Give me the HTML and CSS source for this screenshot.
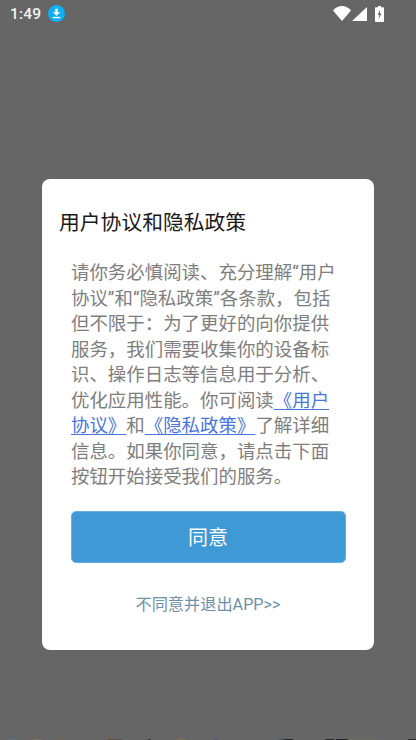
FILE: index.html
```html
<!DOCTYPE html>
<html lang="zh-CN">
<head>
<meta charset="utf-8">
<title>用户协议和隐私政策</title>
<link rel="stylesheet" href="styles.css">
</head>
<body>
<div class="screen">
  <header class="status">
    <span class="time">1:49</span>
    <svg class="dl" viewBox="0 0 18 18"><circle cx="9" cy="9" r="9" fill="#10aef5"/><path d="M7.600 4h2.800v3.600H13L9 11.400 5 7.600h2.600z" fill="#fff"/><rect x="5" y="12.600" width="8" height="1.400" fill="#fff"/></svg>
    <span class="spacer"></span>
    <svg class="wifi" viewBox="0 0 18 15"><path d="M0 4.500C2.400 1.700 5.500 0 9 0s6.600 1.700 9 4.500L9 15z" fill="#fff"/></svg>
    <svg class="signal" viewBox="0 0 15 14"><path d="M15 0v14H0z" fill="#fff"/></svg>
    <svg class="batt" viewBox="0 0 9 16"><path d="M3 0h3v1.300h2.200a.8.800 0 0 1 .8.800v13.100a.8.800 0 0 1-.8.800H.8a.8.800 0 0 1-.8-.8V2.100a.8.800 0 0 1 .8-.8H3z" fill="#fff"/><path d="M5.200 3.800 2.500 8.800h1.700L3.600 13l2.900-5.400H4.700z" fill="#666"/></svg>
  </header>
  <main class="stage">
    <section class="dialog">
      <h1 class="title">用户协议和隐私政策</h1>
      <p class="body">请你务必慎阅读、充分理解“用户协议”和“隐私政策”各条款，包括但不限于：为了更好的向你提供服务，我们需要收集你的设备标识、操作日志等信息用于分析、优化应用性能。你可阅读<a class="link" href="#">《用户协议》</a>和<a class="link" href="#">《隐私政策》</a>了解详细信息。如果你同意，请点击下面按钮开始接受我们的服务。</p>
      <button class="agree">同意</button>
      <a class="refuse" href="#">不同意并退出APP&gt;&gt;</a>
    </section>
  </main>
  <div class="peek"></div>
</div>
</body>
</html>
```
FILE: styles.css
```css
* { box-sizing: border-box; }
html, body { margin: 0; padding: 0; }
body { font-family: "Roboto", "Noto Sans CJK SC", sans-serif; background: #666; }
.screen { width: 416px; height: 740px; overflow: hidden; background: #666; display: flex; flex-direction: column; }
.status { height: 27px; flex: none; display: flex; align-items: center; padding: 0 32px 0 10px; color: #f2f2f2; }
.time { font-size: 15.500px; font-weight: 500; letter-spacing: .2px; width: 38px; }
.dl { width: 17px; height: 17px; }
.spacer { flex: 1; }
.wifi { width: 18px; height: 15px; }
.signal { width: 15px; height: 14px; margin-left: 1px; }
.batt { width: 9px; height: 16px; margin-left: 8px; }
.stage { flex: 1; padding: 152px 42px 0; }
.dialog { width: 332px; height: 471px; background: #fff; border-radius: 8px; display: flex; flex-direction: column; padding: 31px 29px 0 29px; }
.title { margin: 0 0 0 -12px; font-size: 20.800px; line-height: 26px; font-weight: 400; color: #1a1a1a; white-space: nowrap; }
.body { margin: 25px 0 0; width: 274px; font-size: 18.450px; line-height: 25.500px; font-weight: 400; color: #7e7e7e; }
.link { color: #4a74e0; text-decoration: underline; text-underline-offset: 2px; text-decoration-thickness: 1px; }
.agree { margin-top: 20px; margin-left: -.5px; width: 275px; height: 52px; flex: none; border: 1px solid #64b0e4; border-radius: 5px; background: #3f99d4; color: #fff; font: inherit; font-size: 20px; padding: 0; }
.refuse { margin-top: 31px; text-align: center; font-size: 16.200px; line-height: 22px; font-weight: 400; color: #6f90a9; text-decoration: none; }
.peek { height: 1px; flex: none; background: linear-gradient(90deg, #666 9px, #5d7180 9px 17px, #666 17px 33px, #7a7260 33px 42px, #666 42px 56px, #75605c 56px 63px, #666 63px 108px, #5f5040 108px 122px, #666 122px 148px, #3c3c3c 148px 151px, #666 151px 177px, #7d7050 177px 186px, #666 186px 214px, #50566e 214px 218px, #666 218px 278px, #4c5a66 278px 283px, #222 285px 293px, #666 293px 325px, #2a2a2a 325px 334px, #666 334px 336px, #262626 336px 347px, #6e6a5c 349px 380px, #666 380px 408px, #2c2c2c 408px); }
```
